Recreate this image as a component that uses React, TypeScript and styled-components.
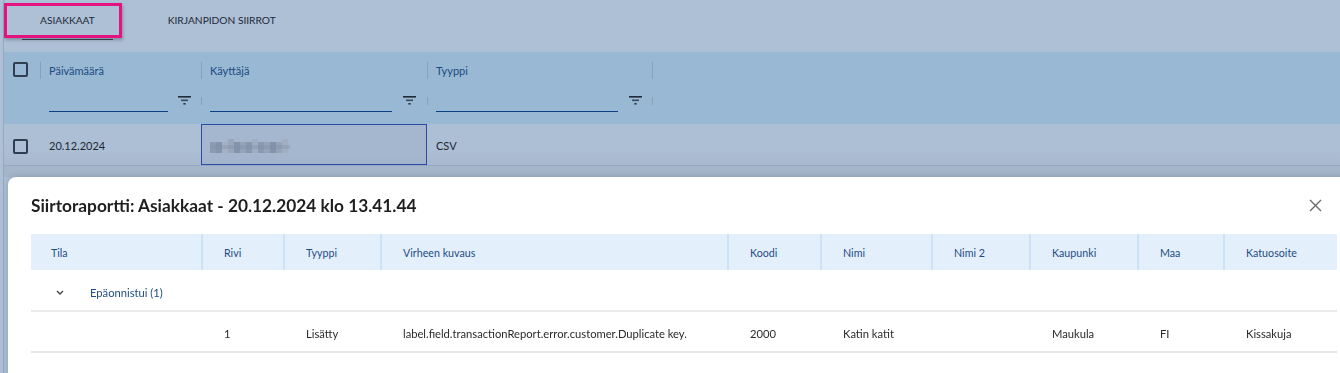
import styled, { createGlobalStyle } from "styled-components";

const GlobalStyle = createGlobalStyle`
  html, body {
    margin: 0;
    padding: 0;
    overflow: hidden;
    background: #aec0d6;
  }
  body {
    font-family: Lato, "Open Sans", "Liberation Sans", sans-serif;
    color: #1d2733;
  }
`;

const Page = styled.div`
  width: 1340px;
  height: 373px;
  display: flex;
  background: #aec0d6;
`;

const LeftRail = styled.div`
  width: 3px;
  flex: none;
`;

const Main = styled.div`
  flex: 1;
  display: flex;
  flex-direction: column;
  border-left: 1px solid #93a8c1;
`;

const TabBar = styled.div`
  height: 52px;
  display: flex;
  align-items: flex-start;
  padding-left: 18px;
  gap: 37px;
`;

const Tab = styled.div<{ $active?: boolean }>`
  height: 40px;
  padding: 0 18px;
  display: flex;
  align-items: center;
  justify-content: center;
  font-size: 10.2px;
  color: #1c2836;
  box-sizing: border-box;
  border-bottom: ${(p) => (p.$active ? "1px solid #3b4553" : "1px solid transparent")};
  min-width: ${(p) => (p.$active ? "88px" : "auto")};
`;

const Highlight = styled.div`
  position: absolute;
  left: 4px;
  top: 3px;
  width: 118px;
  height: 35px;
  box-sizing: border-box;
  border: 3px solid #e5137f;
  box-shadow: 1px 2px 3px rgba(0, 0, 0, 0.25);
  pointer-events: none;
`;

const GridHeader = styled.div`
  height: 72px;
  background: #99b8d3;
  display: grid;
  grid-template-columns: 36px 161px 226px 225px 1fr;
`;

const CheckCell = styled.div`
  padding: 10px 0 0 9px;
`;

const ColHead = styled.div`
  display: grid;
  grid-template-rows: 36px 36px;
`;

const ColTop = styled.div`
  display: flex;
  align-items: center;
`;

const ColBottom = styled.div`
  display: flex;
  align-items: flex-start;
`;

const Divider = styled.span<{ $h: number; $top?: number; $hidden?: boolean }>`
  width: 1px;
  height: ${(p) => p.$h}px;
  margin-top: ${(p) => p.$top ?? 0}px;
  background: ${(p) => (p.$hidden ? "transparent" : "#83a2bf")};
  flex: none;
`;

const HeadLabel = styled.span`
  margin-left: 8px;
  font-size: 11px;
  color: #1b4a82;
`;

const FilterInput = styled.div<{ $w: number }>`
  width: ${(p) => p.$w}px;
  height: 24px;
  margin-left: 8px;
  border-bottom: 1px solid #0c3f86;
  box-sizing: border-box;
  flex: none;
`;

const FilterSlot = styled.div`
  flex: 1;
  display: flex;
  justify-content: center;
  padding-top: 8px;
`;

const Checkbox = styled.span`
  display: block;
  width: 15px;
  height: 15px;
  box-sizing: border-box;
  border: 2px solid #2f3e51;
  border-radius: 2px;
  flex: none;
`;

const DataRow = styled.div`
  height: 42px;
  display: grid;
  grid-template-columns: 36px 161px 226px 1fr;
  background: linear-gradient(#adbfd5 60%, #a8b9cf);
  border-bottom: 1px solid #94a8c0;
  box-sizing: border-box;
`;

const DataCell = styled.div<{ $focus?: boolean }>`
  display: flex;
  align-items: center;
  font-size: 11px;
  color: #1d2733;
  padding-left: ${(p) => (p.$focus ? "8px" : "9px")};
  padding-top: 2px;
  box-sizing: border-box;
  border: ${(p) => (p.$focus ? "1px solid #2c4ba6" : "none")};
  background: ${(p) => (p.$focus ? "rgba(160,178,202,0.6)" : "transparent")};
`;

const CheckData = styled.div`
  display: flex;
  align-items: center;
  padding-left: 9px;
  padding-top: 4px;
`;

const Strip = styled.div`
  height: 11px;
  background: #a6b6ca;
`;

const Dialog = styled.div`
  position: fixed;
  left: 8px;
  top: 177px;
  width: 1380px;
  height: 260px;
  background: #ffffff;
  border-radius: 8px;
  padding: 16px 0 0 23px;
  box-sizing: border-box;
  box-shadow: 0 0 6px rgba(30, 50, 80, 0.25);
`;

const DialogHead = styled.div`
  width: 1306px;
  display: flex;
  align-items: center;
  justify-content: space-between;
  height: 24px;
  margin-bottom: 17px;
`;

const Title = styled.h2`
  margin: 0;
  font-size: 17.3px;
  font-weight: 700;
  color: #1f1f1f;
`;

const CloseButton = styled.button`
  border: none;
  background: none;
  padding: 0;
  margin-right: 15px;
  width: 14px;
  height: 14px;
  display: flex;
  align-items: center;
  justify-content: center;
`;

const Table = styled.div`
  width: 1306px;
  display: grid;
  grid-template-columns: 170px 82px 97px 347px 93px 111px 98px 108px 86px 114px;
`;

const Th = styled.div<{ $first?: boolean }>`
  height: 36px;
  background: #e3f0fb;
  display: flex;
  align-items: center;
  font-size: 10.7px;
  color: #1f4c85;
  padding-left: ${(p) => (p.$first ? "20px" : "21px")};
  border-left: ${(p) => (p.$first ? "none" : "2px solid #cde2f4")};
  box-sizing: border-box;
`;

const GroupRow = styled.div`
  grid-column: 1 / -1;
  height: 42px;
  display: flex;
  align-items: center;
  border-bottom: 2px solid #ebebeb;
  box-sizing: border-box;
  padding: 4px 0 0 25px;
  gap: 26px;
  font-size: 11.2px;
  color: #1f4c85;
`;

const Td = styled.div`
  height: 41px;
  display: flex;
  align-items: center;
  font-size: 11.2px;
  color: #2a2a2a;
  padding: 4px 0 0 23px;
  border-bottom: 2px solid #e6e6e6;
  box-sizing: border-box;
`;

const Blur = () => (
  <svg width="80" height="14" viewBox="0 0 80 14">
    {[
      [0, 3, "#8d9bb1"], [6, 3, "#8695ad"], [12, 3, "#a4b1c4"], [18, 0, "#9aa7bb"],
      [24, 3, "#8494ac"], [30, 3, "#95a3b8"], [36, 3, "#8797ae"], [42, 0, "#9fadc0"],
      [48, 3, "#8a99b0"], [54, 3, "#95a3b8"], [60, 3, "#8393ab"], [66, 3, "#96a3b8"],
      [72, 0, "#a2afc2"],
    ].map(([x, y, c], i) => (
      <rect key={i} x={x as number} y={y as number} width="6" height={14 - (y as number)} fill={c as string} />
    ))}
    <rect x="0" y="6" width="80" height="4" fill="#7f8fa8" opacity="0.35" />
  </svg>
);

const FilterIcon = () => (
  <svg width="13" height="9" viewBox="0 0 13 9">
    <rect x="0" y="0" width="13" height="1.6" fill="#1f2b3b" />
    <rect x="3" y="3.5" width="7" height="1.6" fill="#3c4a5e" />
    <rect x="5.3" y="7" width="2.4" height="1.6" fill="#2f3d50" />
  </svg>
);

const CloseIcon = () => (
  <svg width="13" height="13" viewBox="0 0 13 13">
    <path d="M1 1 L12 12 M12 1 L1 12" stroke="#6a6a6a" strokeWidth="1.4" />
  </svg>
);

const Chevron = () => (
  <svg width="8" height="5" viewBox="0 0 8 5">
    <path d="M1 1 L4 4 L7 1" stroke="#444" strokeWidth="1.4" fill="none" />
  </svg>
);

const reportCols = ["Tila", "Rivi", "Tyyppi", "Virheen kuvaus", "Koodi", "Nimi", "Nimi 2", "Kaupunki", "Maa", "Katuosoite"];
const reportRow = ["", "1", "Lisätty", "label.field.transactionReport.error.customer.Duplicate key.", "2000", "Katin katit", "", "Maukula", "FI", "Kissakuja"];

const gridCols = [
  { label: "Päivämäärä", input: 119, first: true },
  { label: "Käyttäjä", input: 182, first: false },
  { label: "Tyyppi", input: 182, first: false },
];

export default function App() {
  return (
    <>
      <GlobalStyle />
      <Page>
        <LeftRail />
        <Main>
          <TabBar>
            <Tab $active>ASIAKKAAT</Tab>
            <Tab>KIRJANPIDON SIIRROT</Tab>
          </TabBar>
          <GridHeader>
            <CheckCell>
              <Checkbox />
            </CheckCell>
            {gridCols.map((c) => (
              <ColHead key={c.label}>
                <ColTop>
                  <Divider $h={17} />
                  <HeadLabel>{c.label}</HeadLabel>
                </ColTop>
                <ColBottom>
                  <Divider $h={8} $top={9} $hidden={c.first} />
                  <FilterInput $w={c.input} />
                  <FilterSlot>
                    <FilterIcon />
                  </FilterSlot>
                </ColBottom>
              </ColHead>
            ))}
            <ColHead>
              <ColTop>
                <Divider $h={17} />
              </ColTop>
              <ColBottom>
                <Divider $h={8} $top={9} />
              </ColBottom>
            </ColHead>
          </GridHeader>
          <DataRow>
            <CheckData>
              <Checkbox />
            </CheckData>
            <DataCell>20.12.2024</DataCell>
            <DataCell $focus>
              <Blur />
            </DataCell>
            <DataCell>CSV</DataCell>
          </DataRow>
          <Strip />
        </Main>
      </Page>
      <Highlight />
      <Dialog>
        <DialogHead>
          <Title>Siirtoraportti: Asiakkaat - 20.12.2024 klo 13.41.44</Title>
          <CloseButton>
            <CloseIcon />
          </CloseButton>
        </DialogHead>
        <Table>
          {reportCols.map((c, i) => (
            <Th key={c} $first={i === 0}>
              {c}
            </Th>
          ))}
          <GroupRow>
            <Chevron />
            <span>Epäonnistui (1)</span>
          </GroupRow>
          {reportRow.map((v, i) => (
            <Td key={i}>{v}</Td>
          ))}
        </Table>
      </Dialog>
    </>
  );
}
